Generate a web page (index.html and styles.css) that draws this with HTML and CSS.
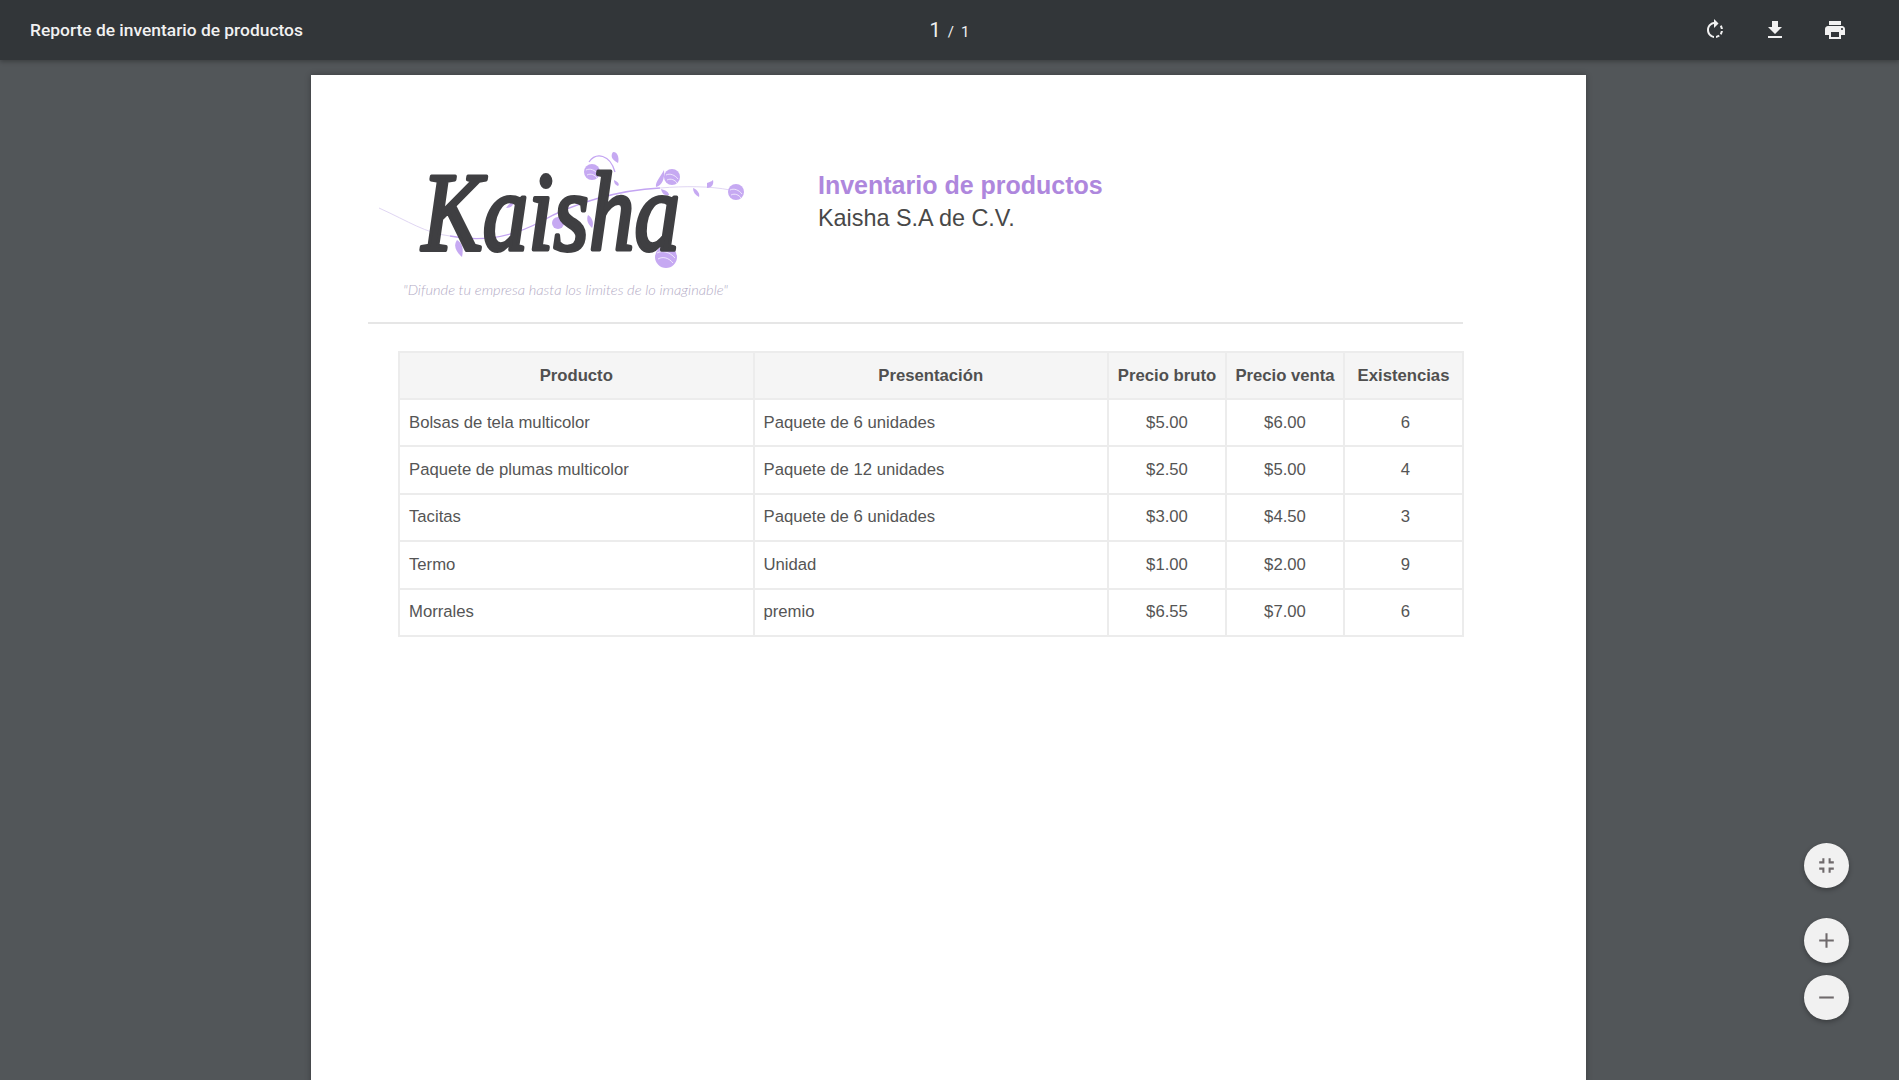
FILE: index.html
```html
<!DOCTYPE html>
<html lang="es">
<head>
<meta charset="utf-8">
<title>Reporte de inventario de productos</title>
<link rel="stylesheet" href="styles.css">
</head>
<body>
<header class="toolbar">
  <div class="doc-title">Reporte de inventario de productos</div>
  <div class="pager"><span class="cur">1</span><span class="sep">/</span><span class="total">1</span></div>
  <div class="actions">
    <svg class="ti" viewBox="0 0 24 24"><path d="M15.55 5.55L11 1v3.07C7.06 4.56 4 7.92 4 12s3.05 7.44 7 7.93v-2.02c-2.84-.48-5-2.94-5-5.91s2.16-5.43 5-5.91V10l4.55-4.45zM19.93 11c-.17-1.39-.72-2.73-1.62-3.89l-1.42 1.42c.54.75.88 1.6 1.02 2.47h2.02zM13 17.9v2.02c1.39-.17 2.74-.71 3.9-1.61l-1.44-1.44c-.75.54-1.59.89-2.46 1.03zm3.89-2.42l1.42 1.41c.9-1.16 1.45-2.5 1.62-3.89h-2.02c-.14.87-.48 1.72-1.02 2.48z"/></svg>
    <svg class="ti" viewBox="0 0 24 24"><path d="M19 9h-4V3H9v6H5l7 7 7-7zM5 18v2h14v-2H5z"/></svg>
    <svg class="ti" viewBox="0 0 24 24"><path d="M19 8H5c-1.66 0-3 1.34-3 3v6h4v4h12v-4h4v-6c0-1.66-1.34-3-3-3zm-3 11H8v-5h8v5zm3-7c-.55 0-1-.45-1-1s.45-1 1-1 1 .45 1 1-.45 1-1 1zm-1-9H6v4h12V3z"/></svg>
  </div>
</header>
<main class="viewer">
  <article class="page">
    <div class="report-head">
      <svg class="logo" viewBox="0 0 400 200">
        <path class="stem-fade" d="M19 78C50 92 65 103 90 106"/>
        <path class="stem" d="M90 106C120 112 150 108 180 92C215 72 260 60 300 58"/>
        <path class="stem-fade" d="M300 58C325 56 350 56 370 60"/>
        <path class="stem" d="M229 32C236 22 250 24 255 42"/>
        <g class="petal">
          <circle cx="232" cy="42" r="8"/>
          <circle cx="312" cy="47" r="8"/>
          <circle cx="376" cy="62" r="8"/>
          <circle cx="306" cy="127" r="11"/>
          <circle cx="160" cy="77" r="5"/>
          <circle cx="198" cy="93" r="6"/>
          <path d="M253 22C259 22 259 30 258 33C252 30 250 26 253 22Z"/>
          <path d="M304 40C301 46 295 52 296 57C302 56 305 48 304 40Z"/>
          <path d="M301 59C305 60 309 62 309 65C304 66 302 63 301 59Z"/>
          <path d="M333 58C338 60 340 64 339 67C335 65 333 62 333 58Z"/>
          <path d="M347 53C351 52 353 50 353 50C354 54 352 58 347 58Z"/>
          <path d="M97 110C104 114 103 122 102 127C96 122 93 116 97 110Z"/>
          <path d="M146 78C151 72 154 68 154 68C155 74 152 78 146 78Z"/>
          <path d="M228 85C233 88 234 94 232 98C228 94 226 90 228 85Z"/>
          <path d="M285 99C287 103 285 107 281 109C280 105 282 101 285 99Z"/>
          <path d="M254 50C258 52 260 54 258 56C255 55 254 53 254 50Z"/>
        </g>
        <g class="petal-lines">
          <path d="M226 40C230 38 235 40 238 44M227 45C231 43 235 45 237 48"/>
          <path d="M306 45C310 43 315 45 318 49M307 50C311 48 315 50 317 53"/>
          <path d="M370 60C374 58 379 60 382 64M371 65C375 63 379 65 381 68"/>
          <path d="M297 123C302 120 310 122 315 128M298 129C303 126 309 128 313 133"/>
        </g>
        <text class="logo-name" x="62" y="120" textLength="258" lengthAdjust="spacingAndGlyphs">Kaisha</text>
        <text class="logo-tag" x="43" y="165" textLength="325" lengthAdjust="spacingAndGlyphs">"Difunde tu empresa hasta los limites de lo imaginable"</text>
      </svg>
      <div class="titles">
        <h1>Inventario de productos</h1>
        <p>Kaisha S.A de C.V.</p>
      </div>
    </div>
    <hr class="rule">
    <table class="inv">
      <colgroup><col class="c-wide"><col class="c-wide"><col class="c-num"><col class="c-num"><col class="c-last"></colgroup>
      <thead>
        <tr><th>Producto</th><th>Presentación</th><th>Precio bruto</th><th>Precio venta</th><th>Existencias</th></tr>
      </thead>
      <tbody>
        <tr><td>Bolsas de tela multicolor</td><td>Paquete de 6 unidades</td><td class="n">$5.00</td><td class="n">$6.00</td><td class="n q">6</td></tr>
        <tr><td>Paquete de plumas multicolor</td><td>Paquete de 12 unidades</td><td class="n">$2.50</td><td class="n">$5.00</td><td class="n q">4</td></tr>
        <tr><td>Tacitas</td><td>Paquete de 6 unidades</td><td class="n">$3.00</td><td class="n">$4.50</td><td class="n q">3</td></tr>
        <tr><td>Termo</td><td>Unidad</td><td class="n">$1.00</td><td class="n">$2.00</td><td class="n q">9</td></tr>
        <tr><td>Morrales</td><td>premio</td><td class="n">$6.55</td><td class="n">$7.00</td><td class="n q">6</td></tr>
      </tbody>
    </table>
  </article>
</main>
<div class="fab-stack">
  <button class="fab fab-fit"><svg viewBox="0 0 24 24"><path d="M5 16h3v3h2v-5H5v2zm3-8H5v2h5V5H8v3zm6 11h2v-3h3v-2h-5v5zm2-11V5h-2v5h5V8h-3z"/></svg></button>
  <button class="fab fab-in"><svg viewBox="0 0 24 24"><path d="M19 13h-6v6h-2v-6H5v-2h6V5h2v6h6v2z"/></svg></button>
  <button class="fab"><svg viewBox="0 0 24 24"><path d="M19 13H5v-2h14v2z"/></svg></button>
</div>
</body>
</html>
```
FILE: styles.css
```css
* { box-sizing: border-box; }
html, body { margin: 0; height: 100%; overflow: hidden; }
body { background: #525659; display: flex; flex-direction: column; font-family: "Liberation Sans", Arial, sans-serif; }

.toolbar {
  height: 60px; flex: none; background: #323639; color: #f1f1f1;
  display: grid; grid-template-columns: 1fr auto 1fr; align-items: center;
  padding: 0 30px; font-family: Roboto, sans-serif;
  box-shadow: 0 2px 4px rgba(0,0,0,.25); position: relative; z-index: 2;
}
.doc-title { font-size: 17.4px; font-weight: 500; color: #f1f1f1; }
.pager { display: flex; align-items: baseline; color: #f1f1f1; font-size: 15px; gap: 7px; position: relative; }
.cur { font-size: 20px; }
.actions { display: flex; justify-content: flex-end; gap: 36px; padding-right: 22px; }
.ti { width: 24px; height: 24px; fill: #f1f1f1; display: block; }

.viewer { flex: 1; min-height: 0; padding: 15px 0 0 311px; overflow: hidden; }
.page {
  width: 1275px; height: 1320px; background: #fff; padding: 55px 0 0 57px;
  box-shadow: 0 0 6px rgba(0,0,0,.3);
}

.report-head { display: flex; align-items: flex-start; height: 192px; margin-left: -8px; }
.logo { width: 400px; height: 200px; flex: none; display: block; }
.titles { margin: 40px 0 0 58px; }
.titles h1 { margin: 0; font-size: 25px; line-height: 30px; font-weight: 700; color: #ae87dd; }
.titles p { margin: 3px 0 0; font-size: 23.4px; line-height: 30px; color: #484848; }

.stem { fill: none; stroke: #c3a4f2; stroke-width: 1.3; }
.stem-fade { fill: none; stroke: #e0d6f3; stroke-width: 1; }
.petal { fill: #c6a9f2; }
.petal-lines { fill: none; stroke: #fff; stroke-width: .7; }
.logo-name { font-family: "Liberation Serif", serif; font-style: italic; font-weight: 400; font-size: 112px; fill: #3f3f42; stroke: #3f3f42; stroke-width: 4; stroke-linejoin: round; }
.logo-tag { font-family: Lato, sans-serif; font-style: italic; font-weight: 300; font-size: 14px; fill: #b4acc6; }

.rule { width: 1095px; height: 2px; margin: 0; border: 0; background: #e6e6e6; }

.inv {
  margin: 27px 0 0 30px; width: 1064px; table-layout: fixed;
  border-collapse: collapse; font-size: 16.7px; color: #555;
}
.c-wide { width: 354.5px; }
.c-num { width: 118px; }
.c-last { width: 119px; }
.inv th, .inv td { border: 2px solid #ececec; padding: 0 9px; height: 47.4px; text-align: left; }
.inv th { background: #f5f5f5; font-weight: 700; text-align: center; padding: 0; color: #505050; height: 47px; }
.inv td.n { text-align: center; }
.inv td.q { padding-left: 13px; padding-right: 9px; }

.fab-stack { position: absolute; left: 1804px; top: 843px; display: flex; flex-direction: column; gap: 12px; }
.fab {
  width: 45px; height: 45px; border-radius: 50%; border: 0; padding: 0; background: #f1f1f1;
  display: flex; align-items: center; justify-content: center;
  box-shadow: 0 2px 5px rgba(0,0,0,.3);
}
.fab svg { width: 25px; height: 25px; fill: #6f6a6c; display: block; }
.fab-fit { margin-bottom: 18px; }
```
